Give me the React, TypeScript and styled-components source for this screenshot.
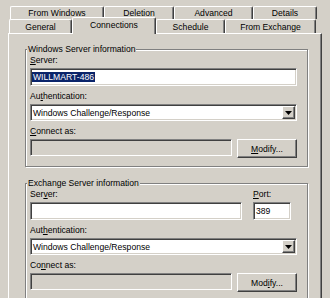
import React from 'react';
import styled, { createGlobalStyle } from 'styled-components';

const GlobalStyle = createGlobalStyle`
  html, body {
    margin: 0;
    padding: 0;
    background: #d4d0c8;
  }
  body {
    font-family: "Liberation Sans", Arial, sans-serif;
    font-size: 8.6px;
    color: #000;
  }
`;

const Screen = styled.div`
  width: 330px;
  height: 298px;
  overflow: hidden;
  box-sizing: border-box;
  padding: 6px 0 0 8px;
`;

const TabRow = styled.div<{ $indent: number; $height: number }>`
  display: flex;
  align-items: flex-end;
  height: ${p => p.$height}px;
  padding-left: ${p => p.$indent}px;
`;

const Tab = styled.div<{ $width: number; $active?: boolean }>`
  position: relative;
  z-index: ${p => (p.$active ? 1 : 0)};
  box-sizing: border-box;
  width: ${p => p.$width}px;
  height: ${p => (p.$active ? '17px' : '100%')};
  margin-bottom: ${p => (p.$active ? '-1px' : '0')};
  display: flex;
  align-items: center;
  justify-content: center;
  background: #d4d0c8;
  border-top: 1px solid #fff;
  border-left: 1px solid #fff;
  border-right: 1px solid #404040;
  border-radius: 2px 2px 0 0;
  box-shadow: inset -1px 0 0 #808080;
  white-space: nowrap;
  padding-bottom: ${p => (p.$active ? '2px' : '0')};
`;

const Panel = styled.div`
  box-sizing: border-box;
  width: 314px;
  height: 300px;
  background: #d4d0c8;
  border-top: 1px solid #fff;
  border-left: 1px solid #fff;
  border-right: 1px solid #404040;
  box-shadow: inset -1px 0 0 #808080;
  padding: 10px 13px 0 16px;
`;

const GroupBox = styled.fieldset<{ $spaced?: boolean }>`
  margin: ${p => (p.$spaced ? '11px' : '0')} 0 0 0;
  padding: 0 10px 8px 4px;
  border: 1px solid #808080;
  box-shadow: inset 1px 1px 0 #fff, 1px 1px 0 #fff;
  min-width: 0;
`;

const Legend = styled.legend`
  margin-left: -3px;
  padding: 0 1px;
  line-height: 11px;
  background: #d4d0c8;
  white-space: nowrap;
`;

const Stack = styled.div`
  display: flex;
  flex-direction: column;
  gap: 5px;
`;

const Field = styled.div<{ $width?: number }>`
  display: flex;
  flex-direction: column;
  width: ${p => (p.$width ? `${p.$width}px` : 'auto')};
`;

const Label = styled.div`
  height: 11px;
  line-height: 11px;
  margin-bottom: 2px;
  white-space: nowrap;
`;

const Key = styled.span`
  text-decoration: underline;
`;

const Sunken = styled.div<{ $height: number; $disabled?: boolean }>`
  box-sizing: border-box;
  height: ${p => p.$height}px;
  display: flex;
  align-items: center;
  padding-left: 2px;
  background: ${p => (p.$disabled ? '#d4d0c8' : '#fff')};
  border: 1px solid;
  border-color: #808080 #fff #fff #808080;
  box-shadow: inset 1px 1px 0 #404040, inset -1px -1px 0 #d4d0c8;
  white-space: nowrap;
  overflow: hidden;
`;

const Selected = styled.span`
  background: #0a246a;
  color: #fff;
  margin-left: -1px;
  padding: 0 1px;
  line-height: 10px;
`;

const SelectText = styled.span`
  flex: 1;
`;

const ArrowButton = styled.div`
  box-sizing: border-box;
  width: 13px;
  height: 13px;
  margin-right: 1px;
  display: flex;
  align-items: center;
  justify-content: center;
  background: #d4d0c8;
  border: 1px solid;
  border-color: #fff #404040 #404040 #fff;
  box-shadow: inset -1px -1px 0 #808080;
`;

const Row = styled.div<{ $gap: number }>`
  display: flex;
  align-items: flex-start;
  gap: ${p => p.$gap}px;
`;

const Grow = styled.div`
  flex: 1;
`;

const Button = styled.div`
  box-sizing: border-box;
  width: 60px;
  height: 19px;
  display: flex;
  align-items: center;
  justify-content: center;
  background: #d4d0c8;
  border: 1px solid;
  border-color: #fff #404040 #404040 #fff;
  box-shadow: inset -1px -1px 0 #808080;
  white-space: nowrap;
`;

const DropArrow = () => (
  <svg width="7" height="4" viewBox="0 0 7 4">
    <polygon points="0,0 7,0 3.5,4" fill="#000" />
  </svg>
);

const Combo: React.FC<{ value: string }> = ({ value }) => (
  <Sunken $height={17}>
    <SelectText>{value}</SelectText>
    <ArrowButton>
      <DropArrow />
    </ArrowButton>
  </Sunken>
);

const ConnectRow: React.FC<{ label: React.ReactNode; button: React.ReactNode }> = ({ label, button }) => (
  <Field>
    <Label>{label}</Label>
    <Row $gap={5}>
      <Grow>
        <Sunken $height={17} $disabled />
      </Grow>
      <Button>{button}</Button>
    </Row>
  </Field>
);

const backTabs = [
  { name: 'From Windows', width: 94 },
  { name: 'Deletion', width: 70 },
  { name: 'Advanced', width: 79 },
  { name: 'Details', width: 64 },
];

const frontTabs = [
  { name: 'General', width: 63 },
  { name: 'Connections', width: 84, active: true },
  { name: 'Schedule', width: 69 },
  { name: 'From Exchange', width: 91 },
];

export default function App() {
  return (
    <>
      <GlobalStyle />
      <Screen>
        <TabRow $indent={2} $height={13}>
          {backTabs.map(t => (
            <Tab key={t.name} $width={t.width}>{t.name}</Tab>
          ))}
        </TabRow>
        <TabRow $indent={1} $height={14}>
          {frontTabs.map(t => (
            <Tab key={t.name} $width={t.width} $active={t.active}>{t.name}</Tab>
          ))}
        </TabRow>
        <Panel>
          <GroupBox>
            <Legend>Windows Server information</Legend>
            <Stack>
              <Field>
                <Label><Key>S</Key>erver:</Label>
                <Sunken $height={18}>
                  <Selected>WILLMART-486</Selected>
                </Sunken>
              </Field>
              <Field>
                <Label>Au<Key>t</Key>hentication:</Label>
                <Combo value="Windows Challenge/Response" />
              </Field>
              <ConnectRow
                label={<><Key>C</Key>onnect as:</>}
                button={<><Key>M</Key>odify...</>}
              />
            </Stack>
          </GroupBox>
          <GroupBox $spaced>
            <Legend>Exchange Server information</Legend>
            <Stack>
              <Row $gap={11}>
                <Field $width={212}>
                  <Label>Ser<Key>v</Key>er:</Label>
                  <Sunken $height={18} />
                </Field>
                <Field $width={38}>
                  <Label><Key>P</Key>ort:</Label>
                  <Sunken $height={18}>389</Sunken>
                </Field>
              </Row>
              <Field>
                <Label>Aut<Key>h</Key>entication:</Label>
                <Combo value="Windows Challenge/Response" />
              </Field>
              <ConnectRow
                label={<>Co<Key>n</Key>nect as:</>}
                button={<>Mod<Key>i</Key>fy...</>}
              />
            </Stack>
          </GroupBox>
        </Panel>
      </Screen>
    </>
  );
}
